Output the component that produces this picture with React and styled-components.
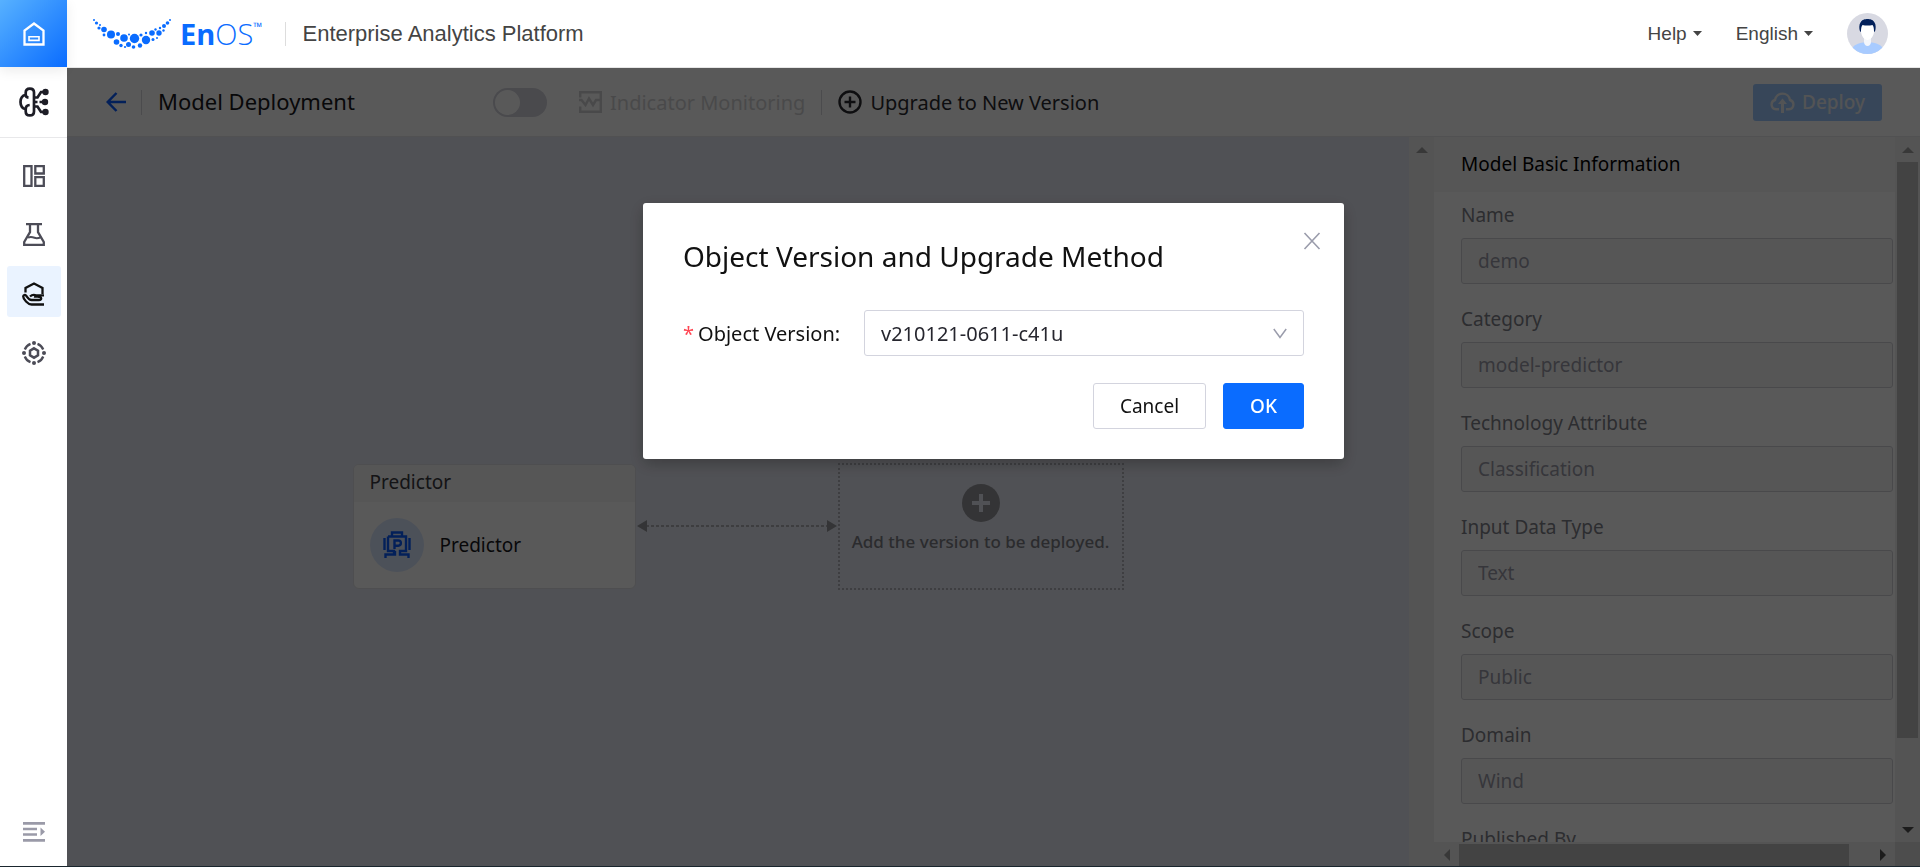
import { useState } from 'react';
import styled, { createGlobalStyle } from 'styled-components';

const GlobalStyle = createGlobalStyle`
    body {
        margin: 0;
        background: #fff;
        font-family: "Noto Sans", "Liberation Sans", sans-serif;
        font-size: 19px;
        color: #17171c;
    }

    * {
        box-sizing: border-box;
    }

    button, input, select {
        font: inherit;
        color: inherit;
    }
`

/* ---------- frame ---------- */

const Shell = styled.div`
    display: grid;
    grid-template-columns: 67px minmax(0, 1fr);
    grid-template-rows: 68px minmax(0, 1fr);
    height: 100vh;
    border-bottom: 1px solid #1a262e;
    overflow: hidden;
`
const HomeLink = styled.a`
    display: flex;
    align-items: center;
    justify-content: center;
    height: 67px;
    background: linear-gradient(135deg, #57b1ff, #0a6cff);
    box-shadow: 0 4px 12px rgba(0, 0, 0, 0.08);
`
const Header = styled.header`
    display: flex;
    align-items: center;
    padding: 0 32px 0 26px;
    border-bottom: 1px solid #e6e6e6;
    font-family: "Liberation Sans", Arial, sans-serif;
    color: #444;
`
const Brand = styled.span`
    display: flex;
    align-items: center;
    color: #0a6cff;
`
const Wordmark = styled.span`
    display: flex;
    margin-left: 8px;
    font-family: "Open Sans", "Noto Sans", sans-serif;
    font-size: 29px;
    font-weight: 300;
    line-height: 40px;

    b {
        font-weight: 700;
    }

    small {
        font-size: 12px;
        font-weight: 400;
        line-height: 26px;
    }
`
const PlatformName = styled.span`
    flex: 1;
    margin-left: 23px;
    padding-left: 16px;
    border-left: 1px solid #ddd;
    font-size: 22px;
    line-height: 24px;
`
const HeaderMenu = styled.button`
    display: flex;
    align-items: center;
    gap: 6px;
    margin-right: 34px;
    padding: 0;
    border: none;
    background: none;
    cursor: pointer;
`
const Avatar = styled.a`
    display: flex;
`

/* ---------- side navigation ---------- */

const Sidebar = styled.nav`
    display: flex;
    flex-direction: column;
    align-items: center;
    gap: 8px;
    padding-bottom: 24px;
    color: #4c4c57;
`
const Product = styled.div`
    display: flex;
    align-items: center;
    justify-content: center;
    width: 100%;
    height: 70px;
    padding-bottom: 2px;
    margin-bottom: 2px;
    border-bottom: 1px solid #e8e8ea;
    color: #1d1d26;
`
const NavItem = styled.a`
    display: flex;
    align-items: center;
    justify-content: center;
    width: 54px;
    height: 51px;
    padding-top: 4px;
    border-radius: 3px;
    background: ${(props) => (props.$active ? '#eaf3ff' : 'transparent')};
    color: ${(props) => (props.$active ? '#111' : 'inherit')};
`
const CollapseButton = styled.button`
    display: flex;
    margin-top: auto;
    padding: 0;
    border: none;
    background: none;
    color: #9a9aa8;
    cursor: pointer;
`

/* ---------- page ---------- */

const Page = styled.main`
    display: flex;
    flex-direction: column;
    min-width: 0;
`
const Toolbar = styled.div`
    display: flex;
    align-items: center;
    height: 69px;
    flex: none;
    padding: 0 38px 0 39px;
    border-bottom: 1px solid #e8e8ea;
`
const BackLink = styled.a`
    display: flex;
    color: #0a5cff;
`
const Divider = styled.span`
    width: 1px;
    height: 25px;
    margin: 0 16px 0 ${(props) => props.$before}px;
    background: #d8d8dd;
`
const PageTitle = styled.h1`
    width: 335px;
    margin: 0;
    padding-bottom: 2px;
    font-size: 22px;
    font-weight: 400;
    line-height: 30px;
`
const Switch = styled.button`
    display: flex;
    width: 54px;
    height: 29px;
    margin-right: 32px;
    padding: 2px;
    border: none;
    border-radius: 15px;
    background: #d3d3dc;
    justify-content: ${(props) => (props['aria-checked'] ? 'flex-end' : 'flex-start')};

    &::before {
        content: "";
        width: 25px;
        height: 25px;
        border-radius: 50%;
        background: #fff;
    }
`
const ToolButton = styled.button`
    display: flex;
    align-items: center;
    gap: 8px;
    padding: 0;
    border: none;
    background: none;
    font-size: 20px;
    color: ${(props) => (props.disabled ? '#d2d2d4' : '#2a2a2e')};
`
const DeployButton = styled.button`
    display: flex;
    align-items: center;
    justify-content: center;
    gap: 7px;
    width: 129px;
    height: 37px;
    margin-left: auto;
    padding: 0;
    border: none;
    border-radius: 3px;
    background: #9dc9ff;
    color: #eef0f2;
    font-weight: 500;
`
const Workspace = styled.div`
    display: flex;
    flex: 1;
    min-height: 0;
`

/* ---------- canvas ---------- */

const Canvas = styled.section`
    display: flex;
    flex: 1;
    align-items: center;
    justify-content: center;
    padding-top: 49px;
    background: #e6e8f2;
`
const NodeCard = styled.article`
    width: 283px;
    height: 125px;
    border: 1px solid #e0e0e4;
    border-radius: 6px;
    background: #fff;
    overflow: hidden;
`
const NodeHead = styled.header`
    padding: 0 16px 2px;
    background: #f5f5f6;
    line-height: 35px;
    color: #3a3a40;
`
const NodeBody = styled.div`
    display: flex;
    align-items: center;
    gap: 16px;
    height: 86px;
    padding: 0 16px;
`
const Connector = styled.svg`
    width: 202px;
    height: 14px;
    color: #aeafb5;
`
const EmptySlot = styled.button`
    display: flex;
    flex-direction: column;
    align-items: center;
    gap: 8px;
    width: 286px;
    height: 127px;
    padding: 19px 0 0;
    border: 2px dotted #b2b3ba;
    background: none;
    color: #7c7d84;
    font-size: 17px;
    font-weight: 500;
`

/* ---------- scroll tracks ---------- */

const Track = styled.div`
    display: flex;
    flex: none;
    flex-direction: ${(props) => (props.$horizontal ? 'row' : 'column')};
    width: ${(props) => (props.$horizontal ? 'auto' : '25px')};
    height: ${(props) => (props.$horizontal ? '24px' : 'auto')};
    padding-top: ${(props) => (props.$horizontal ? 2 : 0)}px;
    background: #f1f1f1;
`
const TrackEnd = styled.span`
    display: flex;
    flex: 0 0 25px;
    align-items: center;
    justify-content: center;
    color: ${(props) => (props.$dim ? '#a0a0a0' : '#505050')};
`
const TrackRoom = styled.div`
    display: flex;
    flex: 1;
    flex-direction: inherit;
    padding: ${(props) => (props.$horizontal ? 0 : '0 2px')};
`
const Thumb = styled.div`
    flex: 0 0 ${(props) => props.$share}%;
    background: #c1c1c1;
`
const Corner = styled.div`
    background: #dcdcdc;
`

/* ---------- info panel ---------- */

const Panel = styled.aside`
    display: grid;
    flex: none;
    grid-template-columns: minmax(0, 1fr) 25px;
    grid-template-rows: minmax(0, 1fr) 24px;
    width: 486px;
`
const PanelScroll = styled.div`
    overflow: hidden;
`
const PanelTitle = styled.h2`
    margin: 0;
    padding: 1px 27px 0;
    border-bottom: 1px solid #f5f5f5;
    background: #f6f6f7;
    font-size: 19px;
    font-weight: 400;
    line-height: 53px;
    color: #000;
`
const Fields = styled.div`
    display: grid;
    gap: 20px;
    padding: 8px 2px 0 27px;
`
const Field = styled.div`
    display: grid;
    gap: 8px;

    label {
        line-height: 30px;
        color: #7f8189;
    }

    input {
        width: 100%;
        height: 46px;
        padding: 0 16px;
        border: 1px solid #d2d2d7;
        border-radius: 3px;
        background: #f6f6f7;
        color: #9b9ca8;
    }
`

/* ---------- dialog ---------- */

const Overlay = styled.div`
    position: fixed;
    inset: 68px 0 1px 67px;
    display: flex;
    align-items: flex-start;
    justify-content: center;
    padding-top: 135px;
    background: rgba(0, 0, 0, 0.65);
`
const Dialog = styled.form`
    position: relative;
    width: 701px;
    padding: 31px 40px 30px;
    border-radius: 3px;
    background: #fff;
    box-shadow: 0 5px 16px rgba(0, 0, 0, 0.25);
    color: #111;
`
const DialogTitle = styled.h2`
    margin: 0 0 32px;
    font-size: 28px;
    font-weight: 400;
    line-height: 44px;
`
const CloseButton = styled.button`
    position: absolute;
    top: 29px;
    right: 23px;
    display: flex;
    padding: 0;
    border: none;
    background: none;
    color: #9a9cab;
    cursor: pointer;
`
const FormRow = styled.div`
    display: grid;
    grid-template-columns: 181px 1fr;
    align-items: center;
    font-size: 20px;
`
const Required = styled.span`
    margin-right: 4px;
    color: #ff4552;
`
const SelectBox = styled.div`
    display: grid;
    align-items: center;

    > * {
        grid-area: 1 / 1;
    }

    select {
        width: 100%;
        height: 46px;
        padding: 0 16px;
        border: 1px solid #d3d4de;
        border-radius: 3px;
        background: #fff;
        color: #26262e;
        appearance: none;
    }

    svg {
        justify-self: end;
        margin-right: 17px;
        color: #9a9cab;
        pointer-events: none;
    }
`
const Actions = styled.div`
    display: flex;
    justify-content: flex-end;
    gap: 17px;
    margin-top: 27px;
`
const ActionButton = styled.button`
    width: ${(props) => (props.$primary ? 81 : 113)}px;
    height: 46px;
    padding: 0;
    border: 1px solid ${(props) => (props.$primary ? '#0a6cff' : '#d3d4de')};
    border-radius: 3px;
    background: ${(props) => (props.$primary ? '#0a6cff' : '#fff')};
    color: ${(props) => (props.$primary ? '#fff' : '#111')};
    font-weight: ${(props) => (props.$primary ? 500 : 400)};
    cursor: pointer;
`

/* ---------- drawings ---------- */

// x, y, radius of every dot in the logo
const logoDots = [
  [1, 2, 1], [3.5, 5, 1.6], [7, 7, 1], [6, 10, 1.6], [11, 11.5, 2.8], [11, 17, 1.4],
  [18, 16.5, 4], [25, 16, 2], [23.5, 24, 2.8], [31, 20, 3.8], [28, 27.5, 1.7], [32, 29, 1.1],
  [36, 16.5, 1], [35.5, 26.5, 2.5], [41.5, 20.5, 4.7], [40.5, 29, 1.8], [48, 17, 1.6], [47, 27.5, 2.2],
  [53, 15, 1.2], [53, 22, 4.2], [59, 15, 2.8], [60, 21.5, 1.5], [62.5, 11.5, 1.2], [64, 20, 1],
  [66, 15, 2.7], [67, 10, 1.2], [70.5, 12.5, 1.2], [71, 8, 2], [74.5, 5, 1.8], [77, 2, 1],
];

function LogoDots() {
  return (
    <svg width="79" height="31" viewBox="0 0 79 31" fill="currentColor">
      {logoDots.map(([x, y, r]) => <circle key={`${x}-${y}`} cx={x} cy={y} r={r} />)}
    </svg>
  )
}

function HomeIcon() {
  return (
    <svg width="22" height="24" viewBox="0 0 22 24" fill="none" stroke="#fff" strokeWidth="2.300">
      <path d="M1.500 22.500V8.500L11 1.500l9.500 7v14z" />
      <path d="M6 14.800h10v3.600H6z" strokeWidth="1.600" />
    </svg>
  )
}

function AvatarIcon() {
  return (
    <svg width="41" height="41" viewBox="0 0 41 41">
      <defs>
        <clipPath id="avatarClip"><circle cx="20.5" cy="20.5" r="20.5" /></clipPath>
      </defs>
      <g clipPath="url(#avatarClip)">
        <rect width="41" height="41" fill="#d8d9e2" />
        <path d="M3 42c1-8 5-11.500 13-12.500h9c8 1 12 4.500 13 12.500z" fill="#a8cbff" />
        <path d="M17 24h7v5c0 2-1.500 4-3.500 4S17 31 17 29z" fill="#f4f6fb" />
        <path d="M14 14c0-4 3-6 6.500-6s6.500 2 6.500 6v4c0 5-3.500 9-6.500 9s-6.500-4-6.500-9z" fill="#fff" />
        <path d="M13 18.500c-1-3-1-7 .5-9C15 6.500 18 6 20.500 6s5.500.5 7 3.500c1.500 2 1.500 6 .5 9l-1 .2c0-3-.3-5-1.500-6.700-3 .8-7 .8-10 0-1.200 1.700-1.500 3.700-1.500 6.700z" fill="#02205a" />
      </g>
    </svg>
  )
}

function Caret() {
  return <svg width="9" height="5" viewBox="0 0 9 5" fill="currentColor"><path d="M0 0h9L4.500 5z" /></svg>
}

function BrainIcon() {
  return (
    <svg width="30" height="30" viewBox="0 0 30 30" fill="none" stroke="currentColor" strokeWidth="2.700">
      <path d="M15 5.500C15 3 13.300 1.600 10.800 1.600S6.700 3.300 6.700 5.800v2C3.500 8.600 1.500 11.500 1.500 15s2 6.400 5.200 7.200v2c0 2.500 1.600 4.200 4.100 4.200S15 27 15 24.500z" />
      <path d="M6.700 7.800c0 1.800 1 2.700 2.800 2.900M6.700 22.200c0-2.500 1.500-4 4-4.200" />
      <path d="M15 15h3.500M20.500 15H25M15 10.500h3.500l3.500-5.500h3.500M15 19.500h3.500L22 25h3.500" />
      <g fill="currentColor" stroke="none">
        <circle cx="26.500" cy="5" r="3.200" />
        <circle cx="26" cy="15" r="3.200" />
        <circle cx="26.500" cy="25" r="3.200" />
      </g>
    </svg>
  )
}

function DashboardIcon() {
  return (
    <svg width="22" height="22" viewBox="0 0 22 22" fill="none" stroke="currentColor" strokeWidth="2.300">
      <path d="M1.200 1.200h7.300v19.600H1.200zM12.300 1.200h8.500v7.300h-8.500zM12.300 12.200h8.500v8.600h-8.500z" />
    </svg>
  )
}

function FlaskIcon() {
  return (
    <svg width="22" height="23" viewBox="0 0 22 23" fill="none" stroke="currentColor" strokeWidth="2.300">
      <path d="M3 1.200h16M7 1.200v8L1.200 19v2.800h19.600V19L15 9.200v-8" />
      <path d="M5 14.500c3-1 4.500-.5 6.500.3s4 .4 6-.3" strokeWidth="2" />
    </svg>
  )
}

function HandIcon() {
  return (
    <svg width="23" height="24" viewBox="0 0 23 24" fill="none" stroke="currentColor" strokeWidth="2.300">
      <path d="M3.500 10.500V6L12 1.600 20.500 6v6" />
      <path d="M22 22.500H9.500C6 22.500 1.200 17 1.200 14.500c0-1.500 1.800-2 2.800-1 1.500 1.700 2.500 4.500 5.500 4.500H18M8 14.500c2-1.800 4-1.800 6-1.200H22M12 14.500c3 .5 6-.5 7 1.200.8 1.500-.5 2.300-2 2.300" />
    </svg>
  )
}

function TargetIcon() {
  return (
    <svg width="24" height="24" viewBox="0 0 24 24" fill="none" stroke="currentColor" strokeWidth="2.300">
      <path d="M15.500 2.800a9.800 9.800 0 0 1 5.700 5.700M21.200 15.500a9.800 9.800 0 0 1-5.700 5.700M8.500 21.200a9.800 9.800 0 0 1-5.700-5.700M2.800 8.500a9.800 9.800 0 0 1 5.700-5.700" />
      <path d="M12 7.300l4 2.300v4.800l-4 2.300-4-2.300V9.600z" strokeWidth="2.500" />
      <g fill="currentColor" stroke="none">
        <circle cx="12" cy="2" r="2" /><circle cx="22" cy="12" r="2" />
        <circle cx="12" cy="22" r="2" /><circle cx="2" cy="12" r="2" />
      </g>
    </svg>
  )
}

function CollapseIcon() {
  return (
    <svg width="22" height="20" viewBox="0 0 22 20" fill="currentColor">
      <path d="M0 0h22v2.800H0zM0 5.700h14v2.600H0zM0 11.200h14v2.600H0zM0 17h22v2.800H0zM17.500 5.500l4.500 4.300-4.500 4.200z" />
    </svg>
  )
}

function BackIcon() {
  return (
    <svg width="20" height="20" viewBox="0 0 20 20" fill="none" stroke="currentColor" strokeWidth="2.500">
      <path d="M20 10H2M10.500 1L1.700 10l8.800 9" />
    </svg>
  )
}

function MonitorIcon() {
  return (
    <svg width="23" height="22" viewBox="0 0 23 22" fill="none" stroke="currentColor" strokeWidth="2.500">
      <path d="M1.200 6.500V1.200h20.600v19.600H1.200V15.500" />
      <path d="M0 9h2.500l4 5 3.500-6.500 4 6.500 3-5h5" />
    </svg>
  )
}

function PlusCircleIcon() {
  return (
    <svg width="24" height="24" viewBox="0 0 24 24" fill="none" stroke="currentColor" strokeWidth="2.400">
      <circle cx="12" cy="12" r="10.500" />
      <path d="M12 6.500v11M6.500 12h11" />
    </svg>
  )
}

function CloudUpIcon() {
  return (
    <svg width="25" height="24" viewBox="0 0 25 24" fill="none" stroke="currentColor" strokeWidth="2.400">
      <path d="M9 19.200H6a4.700 4.700 0 0 1-1-9.200 7.600 7.600 0 0 1 15 0 4.700 4.700 0 0 1-1 9.200h-3" />
      <path d="M12.500 23V12" strokeWidth="3" />
      <path d="M12.500 8.500l4.500 5.500H8z" fill="currentColor" stroke="none" />
    </svg>
  )
}

function PredictorIcon() {
  return (
    <svg width="54" height="54" viewBox="0 0 54 54" fill="none" stroke="#0a5cff" strokeWidth="2.400">
      <circle cx="27" cy="27" r="27" fill="#dbe8ff" stroke="none" />
      <path d="M22 18.500v-4h10v4M18 18.500h18V33h-6v3.500h8.500V40M24 36.500V33h-6V18.500M25 33v3.500h-9.500V40" />
      <path d="M14.500 20v12M39.500 20v12" />
      <path d="M24.500 31v-8.500h3.800a2.500 2.500 0 0 1 0 5.200h-3.800" />
    </svg>
  )
}

function AddIcon() {
  return (
    <svg width="38" height="38" viewBox="0 0 38 38">
      <circle cx="19" cy="19" r="19" fill="#95969c" />
      <path d="M19 10v18M10 19h18" stroke="#e6e8f2" strokeWidth="4" />
    </svg>
  )
}

const arrowPaths = {
  up: 'M0 9h12L6 3z',
  down: 'M0 3h12L6 9z',
  left: 'M9 0v12L3 6z',
  right: 'M3 0v12l6-6z',
};

function TrackArrow({ direction, dim }) {
  return (
    <TrackEnd $dim={dim}>
      <svg width="12" height="12" viewBox="0 0 12 12" fill="currentColor"><path d={arrowPaths[direction]} /></svg>
    </TrackEnd>
  )
}

/* ---------- app ---------- */

const navItems = [
  { name: 'Dashboard', Icon: DashboardIcon },
  { name: 'Lab', Icon: FlaskIcon },
  { name: 'Hosting', Icon: HandIcon, active: true },
  { name: 'Resources', Icon: TargetIcon },
];

const modelInfo = [
  ['Name', 'demo'],
  ['Category', 'model-predictor'],
  ['Technology Attribute', 'Classification'],
  ['Input Data Type', 'Text'],
  ['Scope', 'Public'],
  ['Domain', 'Wind'],
  ['Published By', ''],
];

function InfoPanel() {
  return (
    <Panel>
      <PanelScroll>
        <PanelTitle>Model Basic Information</PanelTitle>
        <Fields>
          {modelInfo.map(([label, value]) => {
            const id = label.toLowerCase().replaceAll(' ', '-');
            return (
              <Field key={id}>
                <label htmlFor={id}>{label}</label>
                <input id={id} value={value} disabled readOnly />
              </Field>
            )
          })}
        </Fields>
      </PanelScroll>
      <Track>
        <TrackArrow direction="up" dim />
        <TrackRoom><Thumb $share={88} /></TrackRoom>
        <TrackArrow direction="down" />
      </Track>
      <Track $horizontal>
        <TrackArrow direction="left" dim />
        <TrackRoom $horizontal><Thumb $share={95} /></TrackRoom>
        <TrackArrow direction="right" />
      </Track>
      <Corner />
    </Panel>
  )
}

function VersionDialog({ onClose }) {
  // Keep the page in place when the form is sent
  function handleSubmit(event) {
    event.preventDefault();
    onClose();
  }

  return (
    <Overlay>
      <Dialog role="dialog" aria-labelledby="dialog-title" onSubmit={handleSubmit}>
        <DialogTitle id="dialog-title">Object Version and Upgrade Method</DialogTitle>
        <CloseButton type="button" aria-label="Close" onClick={onClose}>
          <svg width="18" height="18" viewBox="0 0 18 18" fill="none" stroke="currentColor" strokeWidth="1.600">
            <path d="M1.500 1l15 16M16.500 1l-15 16" />
          </svg>
        </CloseButton>
        <FormRow>
          <label htmlFor="object-version"><Required>*</Required>Object Version:</label>
          <SelectBox>
            <select id="object-version" defaultValue="v210121-0611-c41u">
              <option>v210121-0611-c41u</option>
            </select>
            <svg width="14" height="11" viewBox="0 0 14 11" fill="none" stroke="currentColor" strokeWidth="1.500">
              <path d="M.8 1L7 9.500 13.200 1" />
            </svg>
          </SelectBox>
        </FormRow>
        <Actions>
          <ActionButton type="button" onClick={onClose}>Cancel</ActionButton>
          <ActionButton $primary>OK</ActionButton>
        </Actions>
      </Dialog>
    </Overlay>
  )
}

export default function App() {
  const [dialogOpen, setDialogOpen] = useState(true);

  return (
    <>
      <GlobalStyle />
      <Shell>
        <HomeLink href="#" aria-label="Home"><HomeIcon /></HomeLink>
        <Header>
          <Brand>
            <LogoDots />
            <Wordmark><b>En</b>OS<small>™</small></Wordmark>
          </Brand>
          <PlatformName>Enterprise Analytics Platform</PlatformName>
          <HeaderMenu>Help <Caret /></HeaderMenu>
          <HeaderMenu>English <Caret /></HeaderMenu>
          <Avatar href="#" aria-label="Account"><AvatarIcon /></Avatar>
        </Header>

        <Sidebar>
          <Product><BrainIcon /></Product>
          {navItems.map(({ name, Icon, active }) => (
            <NavItem key={name} href="#" aria-label={name} $active={active}><Icon /></NavItem>
          ))}
          <CollapseButton aria-label="Expand menu"><CollapseIcon /></CollapseButton>
        </Sidebar>

        <Page>
          <Toolbar>
            <BackLink href="#" aria-label="Back"><BackIcon /></BackLink>
            <Divider $before={15} />
            <PageTitle>Model Deployment</PageTitle>
            <Switch role="switch" aria-checked={false} aria-label="Enable deployment" />
            <ToolButton disabled><MonitorIcon />Indicator Monitoring</ToolButton>
            <Divider $before={16} />
            <ToolButton onClick={() => setDialogOpen(true)}><PlusCircleIcon />Upgrade to New Version</ToolButton>
            <DeployButton disabled><CloudUpIcon />Deploy</DeployButton>
          </Toolbar>
          <Workspace>
            <Canvas>
              <NodeCard>
                <NodeHead>Predictor</NodeHead>
                <NodeBody><PredictorIcon />Predictor</NodeBody>
              </NodeCard>
              <Connector viewBox="0 0 202 14">
                <path d="M10 7h182" stroke="currentColor" strokeWidth="2" strokeDasharray="3 2" />
                <path d="M1 7l10-6v12zM201 7l-10-6v12z" fill="#95969c" />
              </Connector>
              <EmptySlot><AddIcon />Add the version to be deployed.</EmptySlot>
            </Canvas>
            <Track>
              <TrackArrow direction="up" dim />
            </Track>
            <InfoPanel />
          </Workspace>
        </Page>
      </Shell>
      {dialogOpen && <VersionDialog onClose={() => setDialogOpen(false)} />}
    </>
  )
}
